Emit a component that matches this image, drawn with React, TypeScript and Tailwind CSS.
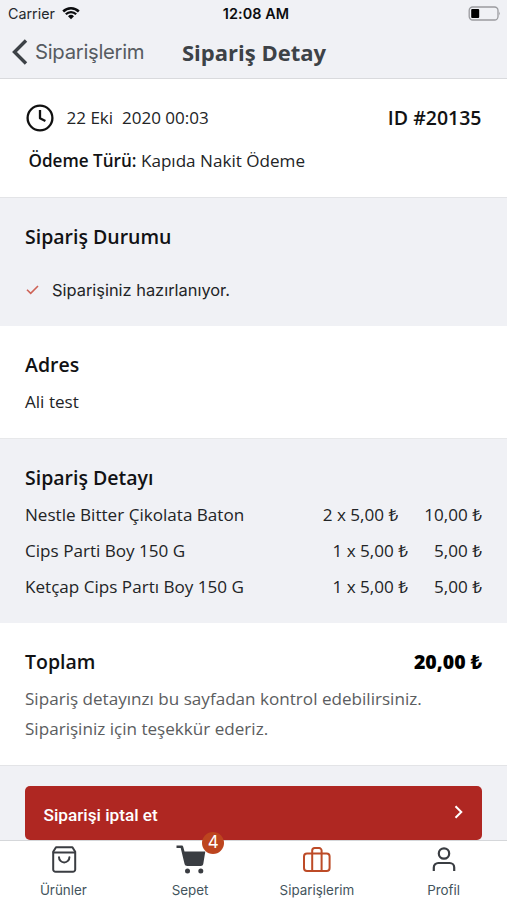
import type { ReactNode } from "react";

const sans = "font-['Open_Sans','Noto_Sans',sans-serif]";
const system = "font-['Inter','Roboto',sans-serif]";

const items = [
  { name: "Nestle Bitter Çikolata Baton", qty: "2 x 5,00 ₺", total: "10,00 ₺" },
  { name: "Cips Parti Boy 150 G", qty: "1 x 5,00 ₺", total: "5,00 ₺" },
  { name: "Ketçap Cips Partı Boy 150 G", qty: "1 x 5,00 ₺", total: "5,00 ₺" },
];

function Heading({ children }: { children: ReactNode }) {
  return <h2 className="text-[19.5px] leading-[28px] font-semibold text-[#111214]">{children}</h2>;
}

function StatusBar() {
  return (
    <div className={`grid h-7 grid-cols-3 items-center pl-2 pr-[6px] pb-px ${system}`}>
      <div className="flex items-center gap-[7px] text-[14.3px] text-[#25282c]">
        Carrier
        <svg width="18" height="13" viewBox="0 0 18 13" fill="none" stroke="#0b0c0e">
          <path d="M1.2 4.5a11 11 0 0 1 15.6 0" strokeWidth="2.5" />
          <path d="M3.8 7.3a7.3 7.3 0 0 1 10.4 0" strokeWidth="2.2" />
          <path d="M6 9.3a4.3 4.3 0 0 1 6 0L9 12.3Z" fill="#0b0c0e" stroke="none" />
        </svg>
      </div>
      <div className="pl-[3px] text-center text-[14.4px] font-semibold tracking-[0.1px] text-[#0b0c0e]">12:08 AM</div>
      <svg className="justify-self-end" width="33" height="15" viewBox="0 0 33 15" fill="none">
        <rect x="1.2" y="1" width="28.8" height="13" rx="3.5" stroke="#9a9b9f" strokeWidth="1.3" />
        <rect x="3.2" y="3" width="8" height="9" rx="1" fill="#000" />
        <path d="M31.2 5.5q1.6 1.8 0 4Z" fill="#9a9b9f" />
      </svg>
    </div>
  );
}

function Tab({ icon, label }: { icon: ReactNode; label: string }) {
  return (
    <div className="flex flex-1 flex-col items-center pt-[3px]">
      <div className="relative h-[32px] w-[32px]">{icon}</div>
      <span className={`mt-[4px] text-[13.4px] leading-[20px] text-[#43545c] ${system}`}>{label}</span>
    </div>
  );
}

export default function App() {
  return (
    <div className={`flex h-[900px] w-full flex-col overflow-hidden bg-[#f0f1f5] text-[#222426] ${sans}`}>
      <header className="h-[79px] shrink-0 border-b border-[#d9dadd]">
        <StatusBar />
        <div className="flex h-[48px] items-center pl-[12px] text-[#3d4247]">
          <svg width="16" height="26" viewBox="0 0 16 26" fill="none" stroke="currentColor" strokeWidth="3.4">
            <path d="M14 1.5 2.5 13 14 24.5" />
          </svg>
          <span className={`ml-[7px] w-[147px] text-[20.3px] tracking-[-0.3px] text-[#565b61] ${system}`}>Siparişlerim</span>
          <h1 className="text-[22px] leading-[30px] font-bold">Sipariş Detay</h1>
        </div>
      </header>

      <section className="h-[118px] shrink-0 bg-white px-[25.5px] pt-[25px]">
        <div className="flex h-[28px] items-center">
          <svg width="28" height="28" viewBox="0 0 28 28" fill="none" stroke="#111" strokeWidth="2.3">
            <circle cx="14" cy="14" r="12.4" />
            <path d="M14 6v8.3l5.4 2.8" strokeLinejoin="round" />
          </svg>
          <span className="ml-[13px] whitespace-pre text-[17.05px]">22 Eki  2020 00:03</span>
          <span className="ml-auto text-[19.5px] font-semibold text-[#111214]">ID #20135</span>
        </div>
        <p className="mt-[17px] pl-[3px] text-[17.1px] leading-[24px]">
          <span className="font-semibold text-[#111214]">Ödeme Türü:</span> Kapıda Nakit Ödeme
        </p>
      </section>

      <section className="h-[129px] shrink-0 border-t border-[#e3e4e7] px-[25px] pt-[25px]">
        <Heading>Sipariş Durumu</Heading>
        <div className="mt-[27px] flex h-[24px] items-center">
          <svg className="ml-px" width="13" height="10" viewBox="0 0 13 10" fill="none" stroke="#ce6256" strokeWidth="1.6">
            <path d="m1 4.7 3.7 3.6L12 1" />
          </svg>
          <span className={`ml-[13px] text-[16.4px] ${system}`}>Siparişiniz hazırlanıyor.</span>
        </div>
      </section>

      <section className="h-[112px] shrink-0 bg-white px-[25px] pt-[25px]">
        <Heading>Adres</Heading>
        <p className="mt-[11px] text-[17.1px] leading-[24px]">Ali test</p>
      </section>

      <section className="h-[185px] shrink-0 border-t border-[#e7e8ea] px-[25px] pt-[25px]">
        <Heading>Sipariş Detayı</Heading>
        <ul className="mt-[5px]">
          {items.map((item) => (
            <li key={item.name} className="flex h-[36px] items-center text-[17.1px]">
              <span className="flex-1">{item.name}</span>
              <span>{item.qty}</span>
              <span className="ml-[26px]">{item.total}</span>
            </li>
          ))}
        </ul>
      </section>

      <section className="h-[142px] shrink-0 bg-white px-[25px] pt-[25px]">
        <div className="flex justify-between">
          <Heading>Toplam</Heading>
          <span className="text-[19.5px] leading-[28px] font-extrabold text-black">20,00 ₺</span>
        </div>
        <p className="mt-[8px] text-[17.1px] leading-[30px] text-[#5b5d60]">
          Sipariş detayınzı bu sayfadan kontrol edebilirsiniz.
          <br />
          Siparişiniz için teşekkür ederiz.
        </p>
      </section>

      <section className="h-[75px] shrink-0 border-t border-[#e3e4e7] px-[25px] pt-[20px]">
        <button className="flex h-[54px] w-full items-center rounded-[5px] bg-[#af2722] pl-[18.5px] pr-[19px] text-white">
          <span className="mt-[5px] font-['Roboto',sans-serif] text-[17.2px] font-medium">Siparişi iptal et</span>
          <svg className="-mt-[3px] ml-auto" width="9" height="14" viewBox="0 0 9 14" fill="none" stroke="white" strokeWidth="2">
            <path d="m1.5 1.2 5.8 5.8-5.8 5.8" />
          </svg>
        </button>
      </section>

      <nav className="flex h-[60px] shrink-0 border-t border-[#d5d7da] bg-white">
        <Tab
          label="Ürünler"
          icon={
            <svg className="ml-[0.5px]" width="32" height="32" viewBox="0 0 32 32" fill="none" stroke="#3a3d42" strokeWidth="2" strokeLinejoin="round" strokeLinecap="round">
              <path d="M8 3.2h16.4l2.8 4.6v17.6a2.4 2.4 0 0 1-2.4 2.4H7.6a2.4 2.4 0 0 1-2.4-2.4V7.8Z" />
              <path d="M5.6 8.6h21.2M11 13.2a5.2 5.2 0 0 0 10.4 0" />
            </svg>
          }
        />
        <Tab
          label="Sepet"
          icon={
            <>
              <svg className="ml-[0.5px]" width="32" height="32" viewBox="0 0 32 32" fill="#3a3d42">
                <path d="M1.5 1.5h5.2c.8 0 1.2.4 1.5 1.2L9.5 7.5h20.8l-2 12.2c-.3 1.5-1.1 2.2-2.5 2.2H12.3c-1.5 0-2.4-.7-2.8-2.2L5.7 4H1.5Z" />
                <circle cx="12.5" cy="27" r="2.5" />
                <circle cx="25.8" cy="27" r="2.5" />
              </svg>
              <span className="absolute -top-[12px] left-[28px] flex h-[22px] w-[22px] items-center justify-center rounded-full bg-[#bd451f] font-['Inter',sans-serif] text-[17px] text-white">
                4
              </span>
            </>
          }
        />
        <Tab
          label="Siparişlerim"
          icon={
            <svg width="32" height="32" viewBox="0 0 32 32" fill="none" stroke="#bd4b27" strokeWidth="2">
              <rect x="3" y="9.5" width="25.6" height="17.6" rx="3" />
              <path d="M11.2 27V6.6a2.5 2.5 0 0 1 2.5-2.5h4.4a2.5 2.5 0 0 1 2.5 2.5V27" />
            </svg>
          }
        />
        <Tab
          label="Profil"
          icon={
            <svg width="32" height="32" viewBox="0 0 32 32" fill="none" stroke="#3a3d42" strokeWidth="2.2">
              <circle cx="16" cy="9.5" r="5.2" />
              <path d="M5.8 27v-3.5a4.5 4.5 0 0 1 4.5-4.5h11.4a4.5 4.5 0 0 1 4.5 4.5V27" />
            </svg>
          }
        />
      </nav>
    </div>
  );
}
